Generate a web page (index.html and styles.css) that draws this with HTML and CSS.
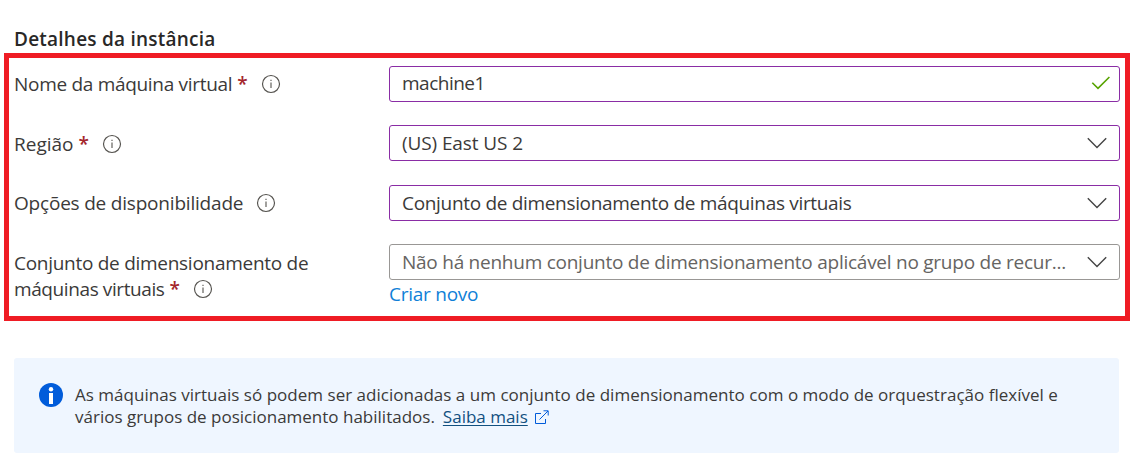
FILE: index.html
```html
<!DOCTYPE html>
<html lang="pt-BR">
<head>
<meta charset="utf-8">
<title>Detalhes da instância</title>
<link rel="stylesheet" href="styles.css">
</head>
<body>
<svg class="defs" aria-hidden="true">
  <symbol id="info" viewBox="0 0 20 20"><circle cx="10" cy="10" r="8.5" fill="none" stroke="currentColor" stroke-width="1.15"/><path d="M10 8.6V14M10 5.7V7" fill="none" stroke="currentColor" stroke-width="1.1"/></symbol>
  <symbol id="chevron" viewBox="0 0 20 12"><path d="M.8 1.2 10 10.4 19.2 1.2" fill="none" stroke="currentColor" stroke-width="1.4"/></symbol>
</svg>
<main class="page">
  <h2 class="heading"><span class="t-heading">Detalhes da instância</span></h2>
  <section class="frame">
    <div class="row">
      <label class="label"><span class="t-name">Nome da máquina virtual</span><b class="req">*</b><svg class="info"><use href="#info"/></svg></label>
      <div class="field field-input"><span class="t-machine">machine1</span><svg class="check" viewBox="0 0 20 14"><path d="M1.3 6.7 7 12.4 18.4 1" fill="none" stroke="currentColor" stroke-width="1.6"/></svg></div>
    </div>
    <div class="row">
      <label class="label"><span class="t-region">Região</span><b class="req">*</b><svg class="info"><use href="#info"/></svg></label>
      <div class="field"><span class="t-east">(US) East US 2</span><svg class="chevron"><use href="#chevron"/></svg></div>
    </div>
    <div class="row">
      <label class="label"><span class="t-options">Opções de disponibilidade</span><svg class="info"><use href="#info"/></svg></label>
      <div class="field"><span class="t-set">Conjunto de dimensionamento de máquinas virtuais</span><svg class="chevron"><use href="#chevron"/></svg></div>
    </div>
    <div class="row">
      <label class="label label-tall"><span class="t-scale">Conjunto de dimensionamento de</span><br><span class="t-vms">máquinas virtuais</span><b class="req">*</b><svg class="info"><use href="#info"/></svg></label>
      <div class="stack">
        <div class="field field-empty"><span class="t-none">Não há nenhum conjunto de dimensionamento aplicável no grupo de recur...</span><svg class="chevron"><use href="#chevron"/></svg></div>
        <a class="create"><span class="t-create">Criar novo</span></a>
      </div>
    </div>
  </section>
  <aside class="notice">
    <svg class="notice-icon" viewBox="0 0 24 24"><circle cx="12" cy="12" r="12" fill="#015cda"/><circle cx="12" cy="6.2" r="2.2" fill="#fff"/><path d="M10 10h4v11h-4z" fill="#fff"/></svg>
    <p class="notice-text"><span class="t-n1">As máquinas virtuais só podem ser adicionadas a um conjunto de dimensionamento com o modo de orquestração flexível e</span><br><span class="t-n2">vários grupos de posicionamento habilitados.</span><a class="more"><span class="t-more">Saiba mais</span></a><svg class="external" viewBox="0 0 16 16"><path d="M7 3.5H1.5V13.5H11.5V9M5.5 9.5 14 1M9.5 .8H14.2V5.5" fill="none" stroke="currentColor" stroke-width="1"/></svg></p>
  </aside>
</main>
</body>
</html>
```
FILE: styles.css
```css
* { box-sizing: border-box; }
body { margin: 0; background: #fff; color: #3b3a39; font: 19px/26px "Open Sans", "Noto Sans", sans-serif; }
.defs { display: block; width: 0; height: 0; }
.page { width: 1138px; height: 465px; padding: 26px 8px 0 4px; overflow: hidden; white-space: nowrap; }
.heading { margin: 0 0 1px 10px; color: #292827; font-size: 19px; line-height: 26px; font-weight: 600; }
.frame { width: 1126px; height: 268px; border: 5px solid #ef1c24; padding: 8px 5px; }
.row { display: grid; grid-template-columns: 375px 731px; height: 59px; align-items: start; }
.row:nth-child(2) { height: 60px; }
.label { padding-top: 5px; }
.label-tall { padding-top: 6px; }
.row:nth-child(2) .label { padding-top: 6px; }
.req { margin-left: 5px; color: #a4262c; font-weight: 600; }
.info { width: 20px; height: 20px; margin-left: 13px; vertical-align: -3px; color: #55534f; }
.field { display: flex; align-items: center; justify-content: space-between; height: 36px; border: 1px solid #8a2da5; border-radius: 3px; padding: 0 12px 0 12px; background: #fff; }
.field-input { padding-bottom: 2px; }
.field-empty { border-color: #999795; color: #666462; }
.chevron { width: 20px; height: 12px; color: #444; flex: none; }
.check { width: 20px; height: 14px; color: #57a300; margin-right: -4px; }
.create { display: block; color: #0f80d7; line-height: 28px; }
.notice { display: flex; width: 1105px; height: 95px; margin: 37px 0 0 10px; padding: 25px 25px 0; border-radius: 3px; background: #eff6ff; }
.notice-icon { width: 24px; height: 24px; margin-right: 12px; }
.notice-text { margin: 1px 0 0; font-size: 17px; line-height: 22px; }
.more { margin-left: 8px; color: #12507f; text-decoration: underline; text-underline-offset: 2px; text-decoration-thickness: 1px; }
.external { width: 16px; height: 16px; margin-left: 6px; vertical-align: -3px; color: #015cda; }
.t-heading { letter-spacing: .23px; }
.t-name { letter-spacing: -.3px; }
.t-machine { letter-spacing: -.5px; }
.t-east { letter-spacing: -.1px; }
.t-options { letter-spacing: -.2px; }
.t-set { letter-spacing: -.32px; }
.t-scale { letter-spacing: -.28px; }
.t-vms { letter-spacing: -.4px; }
.t-none { letter-spacing: -.25px; }
.t-create { letter-spacing: -.25px; }
.t-n1 { letter-spacing: .02px; }
```
